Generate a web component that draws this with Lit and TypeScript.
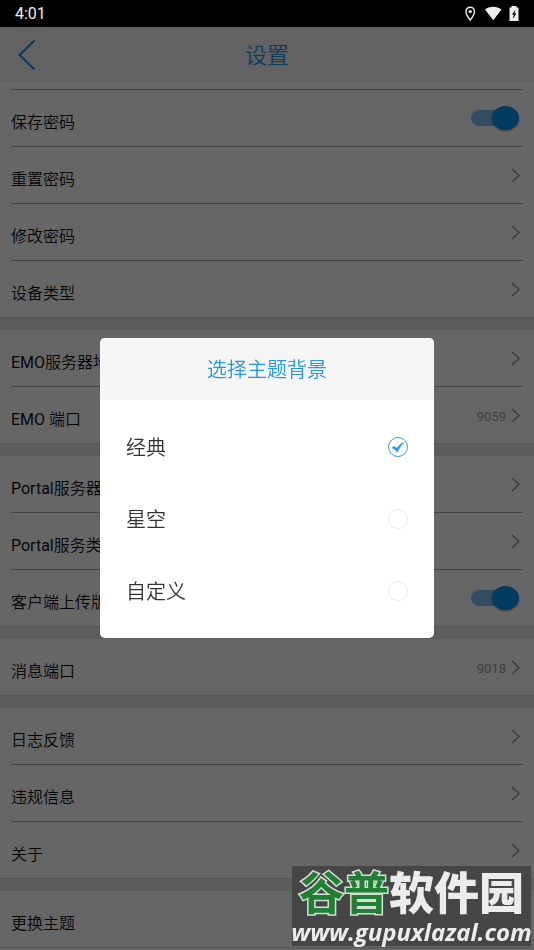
import { LitElement, html, css, svg, nothing } from "lit";
import { customElement, property, state } from "lit/decorators.js";

interface Row {
  prefix?: string;
  label: string;
  value?: string;
  toggle?: boolean;
}

const GROUPS: Row[][] = [
  [
    { label: "保存密码", toggle: true },
    { label: "重置密码" },
    { label: "修改密码" },
    { label: "设备类型" },
  ],
  [
    { prefix: "EMO", label: "服务器地址" },
    { prefix: "EMO ", label: "端口", value: "9059" },
  ],
  [
    { prefix: "Portal", label: "服务器地址" },
    { prefix: "Portal", label: "服务类型" },
    { label: "客户端上传版本", toggle: true },
  ],
  [{ label: "消息端口", value: "9018" }],
  [{ label: "日志反馈" }, { label: "违规信息" }, { label: "关于" }],
  [{ label: "更换主题" }],
];

@customElement("status-bar")
class StatusBar extends LitElement {
  static styles = css`
    :host {
      display: flex;
      align-items: center;
      justify-content: space-between;
      height: 27px;
      padding: 0 15px;
      background: #000;
      color: #eee;
      font-size: 16px;
      font-weight: 400;
    }
    .clock {
      padding-top: 1px;
    }
    .icons {
      display: block;
    }
  `;
  render() {
    return html`
      <span class="clock">4:01</span>
      <svg class="icons" width="54" height="18" viewBox="0 0 54 18" aria-hidden="true">
        <path d="M5.200 2.200a4.300 4.300 0 0 0-4.300 4.300c0 3.200 4.300 8.600 4.300 8.600s4.300-5.400 4.300-8.600a4.300 4.300 0 0 0-4.300-4.300z" fill="none" stroke="#eee" stroke-width="1.400" />
        <circle cx="5.200" cy="6.600" r="1.700" fill="#eee" />
        <path d="M20 4.500C24.800.700 31.700.700 36.500 4.500L28.250 15.200z" fill="#eee" />
        <path d="M44.500 2.500h2V1h5v1.500h2V16h-9z" fill="#eee" />
        <path d="M50.500 4.500l-3.500 5h1.800l-1 4.500 3.600-5.500h-1.900z" fill="#000" />
      </svg>
    `;
  }
}

@customElement("setting-row")
class SettingRow extends LitElement {
  @property({ attribute: false }) row!: Row;

  static styles = css`
    :host {
      display: block;
    }
    .row {
      display: flex;
      align-items: center;
      box-sizing: border-box;
      width: 100%;
      height: 56px;
      margin: 0;
      padding: 0 3px 0 0;
      border: 0;
      background: none;
      font: inherit;
      color: inherit;
      text-align: left;
    }
    .label {
      flex: 1;
      padding-top: 9px;
      white-space: pre;
    }
    .prefix {
      font-weight: 400;
    }
    .value {
      margin-right: 5px;
      padding-top: 3px;
      font-size: 13px;
      font-weight: 400;
      color: #999;
    }
    .chevron {
      display: block;
    }
    .switch {
      appearance: none;
      display: grid;
      align-items: center;
      width: 48px;
      height: 24px;
      margin: 0 1px 0 0;
    }
    .switch::before,
    .switch::after {
      content: "";
      grid-area: 1 / 1;
    }
    .switch::before {
      height: 16px;
      margin-right: 4px;
      border-radius: 8px;
      background: #80c4f4;
    }
    .switch::after {
      justify-self: start;
      width: 27px;
      height: 24px;
      border-radius: 50%;
      background: #0094f0;
      box-shadow: 0 1px 2px rgba(0, 0, 0, 0.4);
    }
    .switch:checked::after {
      justify-self: end;
    }
  `;

  render() {
    const { prefix, label, value, toggle } = this.row;
    const text = html`<span class="label"
      >${prefix ? html`<span class="prefix">${prefix}</span>` : nothing}${label}</span
    >`;
    if (toggle) {
      return html`<label class="row">
        ${text}
        <input class="switch" type="checkbox" role="switch" checked />
      </label>`;
    }
    return html`<button class="row" type="button">
      ${text}
      ${value ? html`<span class="value">${value}</span>` : nothing}
      <svg class="chevron" width="9" height="15" viewBox="0 0 9 15" aria-hidden="true">
        <path d="M1 1L8 7.500L1 14" fill="none" stroke="#888" stroke-width="1.200" />
      </svg>
    </button>`;
  }
}

@customElement("theme-dialog")
class ThemeDialog extends LitElement {
  @state() private selected = "经典";

  static styles = css`
    :host {
      position: fixed;
      inset: 27px 0 0;
      display: flex;
      align-items: center;
      justify-content: center;
      box-sizing: border-box;
      padding-bottom: 2px;
      background: rgba(0, 0, 0, 0.6);
    }
    .dialog {
      width: calc(100% - 200px);
      border-radius: 5px;
      background: #fff;
      overflow: hidden;
      font-size: 20px;
      color: #333;
    }
    .title {
      margin: 0;
      background: #f6f6f6;
      color: #2196ec;
      font-size: 20px;
      font-weight: inherit;
      line-height: 64px;
      height: 62px;
      text-align: center;
    }
    .options {
      margin: 0;
      padding: 11px 26px;
      border: 0;
    }
    .option {
      display: flex;
      align-items: center;
      justify-content: space-between;
      height: 72px;
    }
    .name {
      padding-top: 3px;
    }
    .choice {
      display: grid;
    }
    .radio {
      appearance: none;
      grid-area: 1 / 1;
      box-sizing: border-box;
      width: 20px;
      height: 20px;
      margin: 0;
      border: 1px solid #e8e8e8;
      border-radius: 50%;
    }
    .radio:checked {
      border-color: #3d9df0;
    }
    .tick {
      grid-area: 1 / 1;
      pointer-events: none;
    }
  `;

  render() {
    return html`<section class="dialog" role="dialog" aria-labelledby="title">
      <h2 class="title" id="title">选择主题背景</h2>
      <fieldset class="options" aria-labelledby="title">
        ${["经典", "星空", "自定义"].map(
          (name) => html`<label class="option">
            <span class="name">${name}</span>
            <span class="choice">
              <input
                class="radio"
                type="radio"
                name="theme"
                .checked=${this.selected === name}
                @change=${() => (this.selected = name)}
              />
              ${this.selected === name
                ? html`<svg class="tick" width="20" height="20" viewBox="0 0 20 20" aria-hidden="true">
                    ${svg`<path d="M4 10.800L6.400 9.300L8.500 11.300C10.500 8.500 12.800 6.700 16 5.500C13.200 8.300 11 11.200 9.200 15.500C7.800 13.500 6.300 12 4 10.800z" fill="#2f96ee" stroke="#2f96ee" stroke-width=".5" />`}
                  </svg>`
                : nothing}
            </span>
          </label>`
        )}
      </fieldset>
    </section>`;
  }
}

@customElement("site-mark")
class SiteMark extends LitElement {
  static styles = css`
    :host {
      position: fixed;
      right: 3px;
      bottom: 4px;
      display: flex;
      flex-direction: column;
      align-items: center;
      width: 239px;
      height: 80px;
      background: #464646;
      color: #ececec;
      white-space: nowrap;
    }
    .name {
      font-size: 45px;
      font-weight: 900;
      line-height: 58px;
    }
    .green {
      color: #1f8035;
      font-weight: 700;
      paint-order: stroke fill;
      -webkit-text-stroke: 3px #d4ded4;
    }
    .url {
      margin-top: -6px;
      color: inherit;
      font: italic 700 24px/28px "Open Sans", sans-serif;
      text-decoration: none;
    }
  `;
  render() {
    return html`
      <span class="name"><span class="green">谷普</span>软件园</span>
      <a class="url" href="#">www.gupuxlazal.com</a>
    `;
  }
}

@customElement("app-root")
class AppRoot extends LitElement {
  static styles = css`
    :host {
      display: block;
      min-height: 100vh;
      background: #fff;
      color: #111;
      font: 350 16px/24px Roboto, "Noto Sans CJK SC", sans-serif;
    }
    .header {
      display: grid;
      grid-template-columns: 56px 1fr 56px;
      align-items: center;
      height: 55px;
      margin-bottom: 7px;
      background: #f6f6f6;
    }
    .back {
      display: grid;
      margin: 0;
      padding: 0 0 0 18px;
      border: 0;
      background: none;
    }
    .heading {
      margin: 0;
      padding-top: 3px;
      color: #2196ec;
      font-size: 22px;
      font-weight: inherit;
      line-height: 32px;
      text-align: center;
    }
    .group {
      padding: 0 11px;
      border-bottom: 1px solid #d4d4d4;
    }
    .group + .group {
      margin-top: 12px;
      box-shadow: 0 -12px #e8e8e8, 0 -1px #d4d4d4;
    }
    .first::before {
      content: "";
      display: block;
      border-top: 1px solid #aaa;
    }
    .item + .item {
      border-top: 1px solid #aaa;
    }
  `;

  render() {
    return html`
      <status-bar></status-bar>
      <header class="header">
        <button class="back" type="button" aria-label="返回">
          <svg width="18" height="32" viewBox="0 0 18 32" aria-hidden="true">
            <path d="M16.500 1.500L1.500 16L16.500 30.500" fill="none" stroke="#1f86ec" stroke-width="1.800" />
          </svg>
        </button>
        <h1 class="heading">设置</h1>
      </header>
      <main>
        ${GROUPS.map(
          (rows, i) => html`<section class="group ${i === 0 ? "first" : ""}">
            ${rows.map((row) => html`<setting-row class="item" .row=${row}></setting-row>`)}
          </section>`
        )}
      </main>
      <theme-dialog></theme-dialog>
      <site-mark></site-mark>
    `;
  }
}
